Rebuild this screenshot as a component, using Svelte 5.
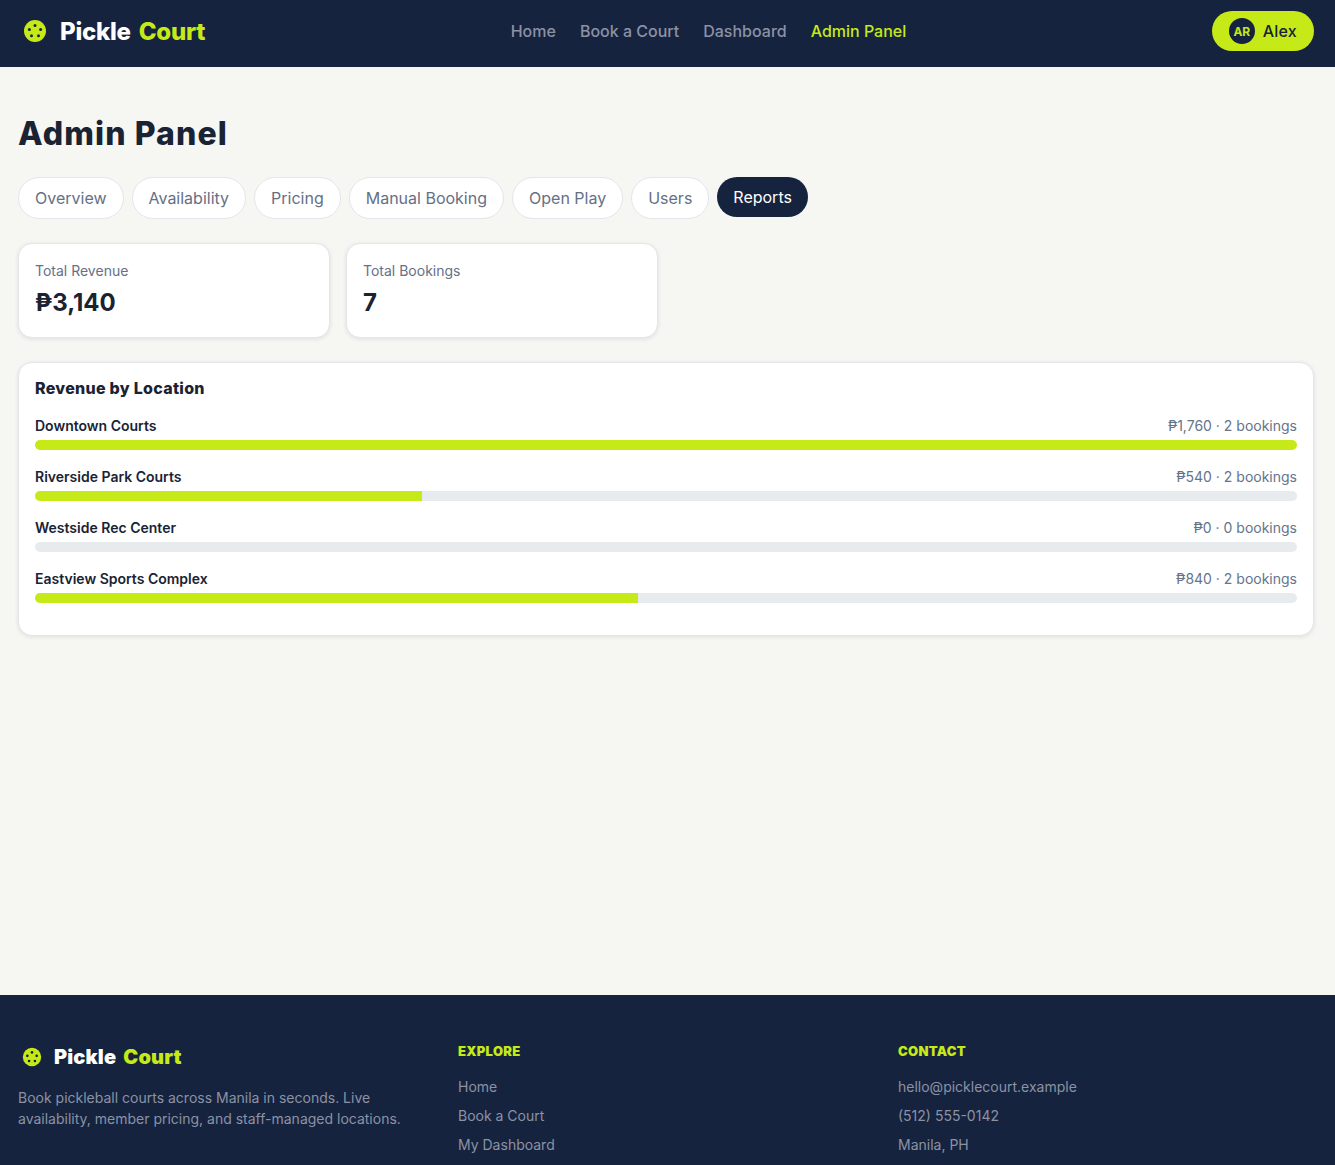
<script>
  const links = ["Home", "Book a Court", "Dashboard", "Admin Panel"];
  const tabs = ["Overview", "Availability", "Pricing", "Manual Booking", "Open Play", "Users", "Reports"];
  const stats = [
    { label: "Total Revenue", value: "₱3,140" },
    { label: "Total Bookings", value: "7" }
  ];
  const locations = [
    { name: "Downtown Courts", info: "₱1,760 · 2 bookings", pct: 100 },
    { name: "Riverside Park Courts", info: "₱540 · 2 bookings", pct: 30.68 },
    { name: "Westside Rec Center", info: "₱0 · 0 bookings", pct: 0 },
    { name: "Eastview Sports Complex", info: "₱840 · 2 bookings", pct: 47.8 }
  ];
  const explore = ["Home", "Book a Court", "My Dashboard"];
  const contact = ["hello@picklecourt.example", "(512) 555-0142", "Manila, PH"];
</script>

<div class="page">
  <header class="nav">
    <div class="logo">
      <svg class="ball" viewBox="0 0 24 24" width="24" height="24">
        <circle cx="12" cy="12" r="11" fill="#c5ea17" />
        <circle cx="12" cy="6.5" r="1.5" fill="#16233f" />
        <circle cx="6.4" cy="10.6" r="1.5" fill="#16233f" />
        <circle cx="17.6" cy="10.6" r="1.5" fill="#16233f" />
        <circle cx="8.5" cy="16.8" r="1.5" fill="#16233f" />
        <circle cx="15.5" cy="16.8" r="1.5" fill="#16233f" />
      </svg>
      <span>Pickle <em>Court</em></span>
    </div>
    <nav class="links">
      {#each links as link}
        <span class:active={link === "Admin Panel"}>{link}</span>
      {/each}
    </nav>
    <div class="user">
      <span class="avatar">AR</span>
      <span>Alex</span>
    </div>
  </header>

  <main>
    <h1>Admin Panel</h1>
    <div class="tabs">
      {#each tabs as tab}
        <button class:current={tab === "Reports"}>{tab}</button>
      {/each}
    </div>
    <div class="stats">
      {#each stats as stat}
        <div class="card stat">
          <div class="label">{stat.label}</div>
          <div class="value">{stat.value}</div>
        </div>
      {/each}
    </div>
    <section class="card revenue">
      <h2>Revenue by Location</h2>
      {#each locations as loc}
        <div class="row">
          <div class="row-head">
            <span class="name">{loc.name}</span>
            <span class="info">{loc.info}</span>
          </div>
          <div class="track"><div class="fill" style="width: {loc.pct}%"></div></div>
        </div>
      {/each}
    </section>
  </main>

  <footer>
    <div class="brand">
      <div class="logo small">
        <svg class="ball" viewBox="0 0 24 24" width="20" height="20">
          <circle cx="12" cy="12" r="11" fill="#c5ea17" />
          <circle cx="12" cy="6.5" r="1.6" fill="#16233f" />
          <circle cx="6.4" cy="10.6" r="1.6" fill="#16233f" />
          <circle cx="17.6" cy="10.6" r="1.6" fill="#16233f" />
          <circle cx="8.5" cy="16.8" r="1.6" fill="#16233f" />
          <circle cx="15.5" cy="16.8" r="1.6" fill="#16233f" />
        </svg>
        <span>Pickle <em>Court</em></span>
      </div>
      <p>Book pickleball courts across Manila in seconds. Live availability, member pricing, and staff-managed locations.</p>
    </div>
    <div class="col">
      <h4>EXPLORE</h4>
      {#each explore as item}<div class="item">{item}</div>{/each}
    </div>
    <div class="col">
      <h4>CONTACT</h4>
      {#each contact as item}<div class="item">{item}</div>{/each}
    </div>
  </footer>
</div>

<style>
  :global(body) {
    margin: 0;
    background: #f6f6f2;
    font-family: Inter, "Liberation Sans", sans-serif;
    color: #16233f;
  }
  .page {
    min-height: 1165px;
    display: flex;
    flex-direction: column;
    overflow: hidden;
  }
  .nav {
    height: 67px;
    flex: none;
    background: #16233f;
    display: flex;
    align-items: center;
    justify-content: space-between;
    padding: 0 21px 5px 23px;
    box-sizing: border-box;
  }
  .logo {
    display: flex;
    align-items: center;
    gap: 13px;
    color: #fff;
    font-size: 24px;
    font-weight: 800;
    letter-spacing: -0.25px;
  }
  .logo em {
    font-style: normal;
    color: #c5ea17;
    margin-left: 3px;
  }
  .ball {
    flex: none;
  }
  .links {
    display: flex;
    gap: 24px;
    font-size: 16px;
    font-weight: 500;
    color: #8b92a3;
  }
  .links .active {
    color: #c5ea17;
  }
  .user {
    height: 40px;
    box-sizing: border-box;
    background: #c5ea17;
    border-radius: 20px;
    padding: 0 17px;
    display: flex;
    align-items: center;
    gap: 8px;
    font-size: 16px;
    font-weight: 500;
    letter-spacing: 0.2px;
    color: #16233f;
  }
  .avatar {
    width: 26px;
    height: 26px;
    border-radius: 50%;
    background: #16233f;
    color: #c5ea17;
    font-size: 12px;
    font-weight: 700;
    letter-spacing: 0;
    display: flex;
    align-items: center;
    justify-content: center;
  }
  main {
    flex: 1;
    padding: 48px 21px 0 18px;
  }
  h1 {
    margin: 0 0 24px;
    font-size: 32px;
    line-height: 38px;
    font-weight: 800;
    letter-spacing: 1.1px;
    color: #1a2333;
  }
  .tabs {
    display: flex;
    gap: 8px;
    margin-bottom: 24px;
  }
  button {
    font: inherit;
    font-size: 16px;
    height: 42px;
    padding: 0 16px;
    border-radius: 21px;
    border: 1px solid #e4e6ec;
    background: #fff;
    color: #667085;
  }
  button.current {
    height: 40px;
    background: #16233f;
    border: none;
    color: #fff;
  }
  .card {
    background: #fff;
    border: 1px solid #e4e6ec;
    border-radius: 14px;
    box-shadow: 0 1px 4px rgba(22, 35, 63, 0.1);
    box-sizing: border-box;
  }
  .stats {
    display: flex;
    gap: 16px;
    margin-bottom: 24px;
  }
  .stat {
    width: 312px;
    height: 95px;
    padding: 17px 16px;
  }
  .label {
    font-size: 14px;
    line-height: 20px;
    color: #667085;
  }
  .value {
    margin-top: 6px;
    font-size: 24px;
    line-height: 32px;
    font-weight: 700;
    color: #1a2333;
  }
  .revenue {
    height: 274px;
    padding: 15px 16px;
  }
  h2 {
    margin: 0 0 18px;
    font-size: 16px;
    line-height: 20px;
    font-weight: 800;
    letter-spacing: 0.28px;
    color: #1a2333;
  }
  .row {
    margin-bottom: 17px;
  }
  .row-head {
    display: flex;
    justify-content: space-between;
    align-items: flex-start;
    height: 20px;
    line-height: 20px;
    margin-bottom: 4px;
    font-size: 14px;
  }
  .name {
    font-weight: 600;
    color: #1a2333;
  }
  .info {
    color: #64748b;
  }
  .track {
    height: 10px;
    border-radius: 5px;
    background: #e8ebee;
    overflow: hidden;
  }
  .fill {
    height: 100%;
    background: #c5ea17;
  }
  footer {
    flex: none;
    height: 170px;
    box-sizing: border-box;
    background: #16233f;
    padding: 46px 18px 0;
    display: grid;
    grid-template-columns: 440px 440px 1fr;
    color: #8b92a3;
    overflow: hidden;
  }
  .logo.small {
    font-size: 20px;
    font-weight: 900;
    letter-spacing: 0.15px;
    gap: 12px;
    padding-left: 4px;
    margin-bottom: 14px;
    line-height: 32px;
  }
  .brand p {
    margin: 0;
    width: 400px;
    font-size: 14px;
    line-height: 21px;
  }
  h4 {
    margin: 0 0 15px;
    font-size: 13px;
    line-height: 20px;
    font-weight: 900;
    letter-spacing: 0.3px;
    color: #c5ea17;
  }
  .item {
    font-size: 14px;
    line-height: 21px;
    margin-bottom: 8px;
  }
</style>
